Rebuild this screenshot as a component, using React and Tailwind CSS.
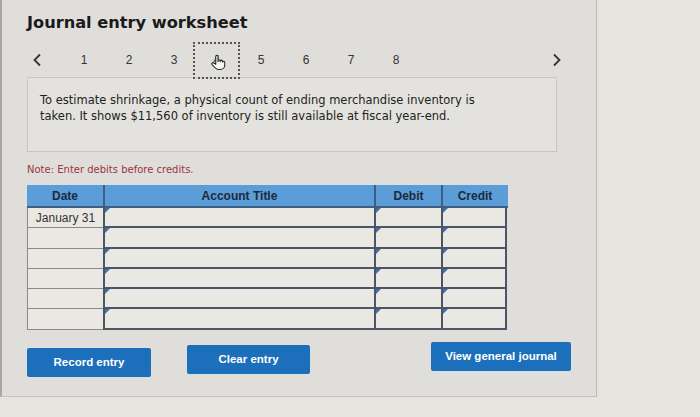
import React from "react";

const Flag = () => (
  <span className="absolute left-0 top-0 w-0 h-0 border-t-[5px] border-t-[#3f6fa8] border-r-[5px] border-r-transparent" />
);

function Row({ date }) {
  return (
    <div className="flex h-[20.3px]">
      <div className="w-[76px] border-l border-b border-[#8a8a8a] text-[12px] text-[#333] flex items-center justify-center bg-[#e9e8e3]" style={{ fontFamily: "'Liberation Sans', Arial, sans-serif" }}>
        {date}
      </div>
      <div className="relative w-[271px] border-l-2 border-b-2 border-[#4b5563] bg-[#e9e8e3]"><Flag /></div>
      <div className="relative w-[67px] border-l-2 border-b-2 border-[#4b5563] bg-[#e9e8e3]"><Flag /></div>
      <div className="relative w-[66px] border-l-2 border-r-2 border-b-2 border-[#4b5563] bg-[#e9e8e3]"><Flag /></div>
    </div>
  );
}

export default function App() {
  const arial = { fontFamily: "'Liberation Sans', Arial, sans-serif" };
  const verdana = { fontFamily: "'DejaVu Sans', Verdana, sans-serif" };
  return (
    <div className="w-[700px] h-[417px] bg-[#e5e4df] overflow-hidden">
      <div className="w-[597px] h-[397px] bg-[#dfdeda] border-l-2 border-l-[#a8a7a3] border-r border-r-[#b8b7b2] border-b border-b-[#c4c3be] pl-[25px] pt-[12px]">
        <h1 className="text-[16.2px] font-bold text-[#1a1a1a] leading-[22px]" style={verdana}>
          Journal entry worksheet
        </h1>
        <div className="flex items-center h-[38px] mt-[7px] text-[12px] text-[#333]" style={arial}>
          <svg width="10" height="14" viewBox="0 0 10 14" className="ml-[5px]">
            <path d="M8 1.5 L2.5 7 L8 12.5" stroke="#333" strokeWidth="1.8" fill="none" />
          </svg>
          <span className="ml-[38px] w-[8px] text-center">1</span>
          <span className="ml-[37px] w-[8px] text-center">2</span>
          <span className="ml-[37px] w-[8px] text-center">3</span>
          <div className="ml-[15px] w-[47px] h-[37px] border-2 border-dotted border-[#555] flex items-center justify-center relative">
            <span className="text-[#666]">4</span>
            <svg width="18" height="18" viewBox="0 0 24 24" className="absolute left-[14px] top-[9px]" fill="#f5f5f5" stroke="#222" strokeWidth="1.4" strokeLinejoin="round">
              <path d="M9 12V4.5a1.5 1.5 0 0 1 3 0V11 M12 10.5a1.5 1.5 0 0 1 3 0V12 M15 11a1.5 1.5 0 0 1 3 0v1.5 M18 12.5a1.5 1.5 0 0 1 3 0V16a6 6 0 0 1-6 6h-2a6 6 0 0 1-4.5-2L4 15.5a1.6 1.6 0 0 1 2.3-2.2L9 15V12" />
            </svg>
          </div>
          <span className="ml-[17px] w-[8px] text-center">5</span>
          <span className="ml-[37px] w-[8px] text-center">6</span>
          <span className="ml-[37px] w-[8px] text-center">7</span>
          <span className="ml-[37px] w-[8px] text-center">8</span>
          <svg width="10" height="14" viewBox="0 0 10 14" className="ml-[152px]">
            <path d="M2 1.5 L7.5 7 L2 12.5" stroke="#333" strokeWidth="1.8" fill="none" />
          </svg>
        </div>
        <div className="w-[530px] h-[75px] mt-[-2px] border border-[#c7c6c1] bg-[#e3e2de] pl-[12px] pt-[14px] text-[11.5px] leading-[16px] text-[#222]" style={verdana}>
          To estimate shrinkage, a physical count of ending merchandise inventory is
          <br />
          taken. It shows $11,560 of inventory is still available at fiscal year-end.
        </div>
        <div className="mt-[11px] text-[10px] text-[#a0353a] leading-[14px]" style={verdana}>
          Note: Enter debits before credits.
        </div>
        <div className="mt-[8px] w-[481px]">
          <div className="flex h-[23px] bg-[#5b9dd8] border-b-2 border-[#3e5f82] text-[12px] font-bold text-[#1c2a3c]" style={arial}>
            <div className="w-[76px] flex items-center justify-center">Date</div>
            <div className="w-[271px] border-l-2 border-[#3e5f82] flex items-center justify-center">Account Title</div>
            <div className="w-[67px] border-l-2 border-[#3e5f82] flex items-center justify-center">Debit</div>
            <div className="w-[66px] border-l-2 border-[#3e5f82] flex items-center justify-center">Credit</div>
          </div>
          <Row date="January 31" />
          <Row date="" />
          <Row date="" />
          <Row date="" />
          <Row date="" />
          <Row date="" />
        </div>
        <div className="flex items-start mt-[12px] text-[11.5px] font-bold text-white" style={arial}>
          <button className="w-[124px] h-[29px] bg-[#1c6fba] rounded-[2px] mt-[6px]">Record entry</button>
          <button className="ml-[36px] w-[123px] h-[29px] bg-[#1c6fba] rounded-[2px] mt-[3px]">Clear entry</button>
          <button className="ml-[121px] w-[140px] h-[29px] bg-[#1c6fba] rounded-[2px]">View general journal</button>
        </div>
      </div>
    </div>
  );
}
